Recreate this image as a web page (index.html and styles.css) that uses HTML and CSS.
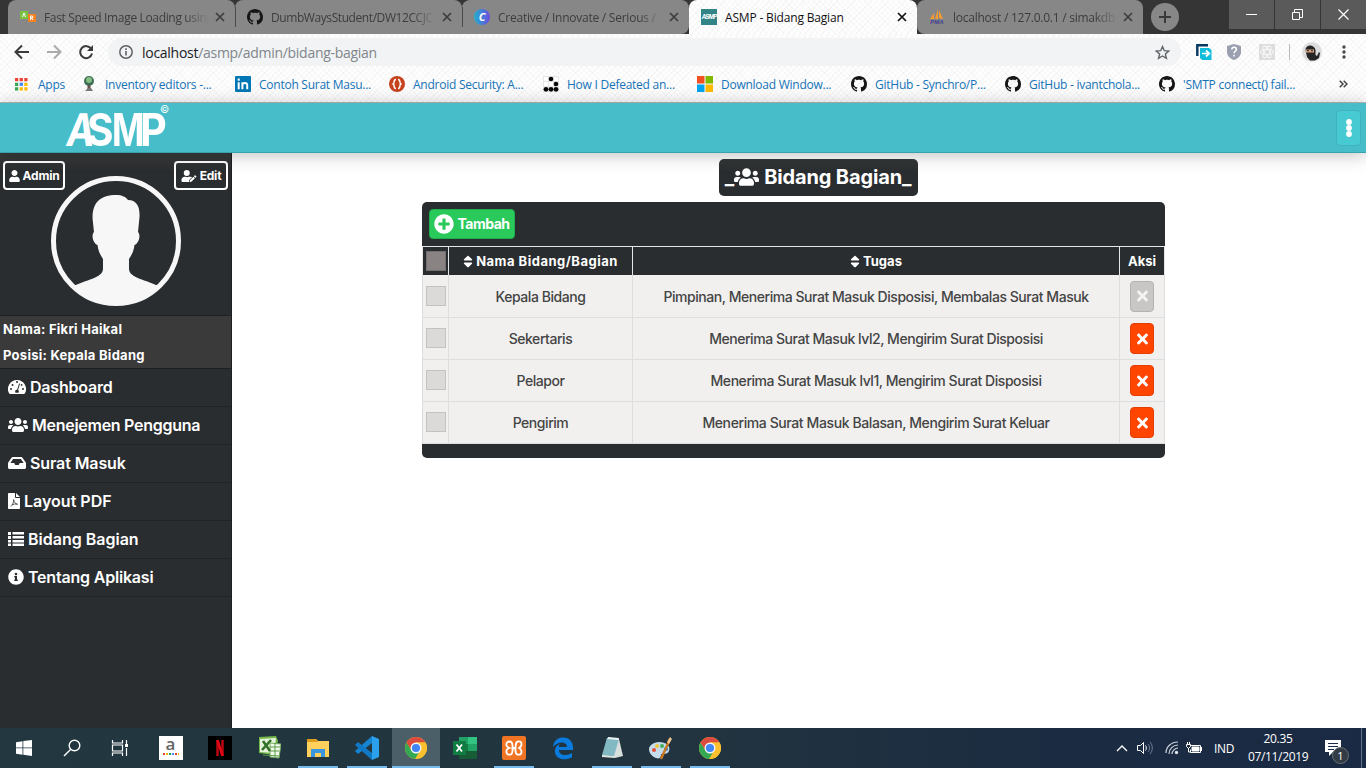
FILE: index.html
```html
<!DOCTYPE html>
<html lang="id">
<head>
<meta charset="utf-8">
<title>ASMP - Bidang Bagian</title>
<link rel="stylesheet" href="styles.css">
</head>
<body>
<svg class="defs" width="0" height="0">
  <symbol id="x" viewBox="0 0 10 10"><path d="M1 1l8 8M9 1l-8 8" stroke="currentColor" stroke-width="1.7"/></symbol>
  <symbol id="github" viewBox="0 0 16 16"><path fill="#161616" d="M8 0C3.58 0 0 3.58 0 8c0 3.54 2.29 6.53 5.47 7.59.4.07.55-.17.55-.38 0-.19-.01-.82-.01-1.49-2.01.37-2.53-.49-2.69-.94-.09-.23-.48-.94-.82-1.13-.28-.15-.68-.52-.01-.53.63-.01 1.08.58 1.23.82.72 1.21 1.87.87 2.33.66.07-.52.28-.87.51-1.07-1.78-.2-3.64-.89-3.64-3.95 0-.87.31-1.59.82-2.15-.08-.2-.36-1.02.08-2.12 0 0 .67-.21 2.2.82.64-.18 1.32-.27 2-.27s1.36.09 2 .27c1.53-1.04 2.2-.82 2.2-.82.44 1.1.16 1.92.08 2.12.51.56.82 1.27.82 2.15 0 3.07-1.87 3.75-3.65 3.95.29.25.54.73.54 1.48 0 1.07-.01 1.93-.01 2.2 0 .21.15.46.55.38A8.01 8.01 0 0 0 16 8c0-4.42-3.58-8-8-8z"/></symbol>
  <symbol id="user" viewBox="0 0 448 512"><path fill="currentColor" d="M224 256c70.7 0 128-57.3 128-128S294.7 0 224 0 96 57.3 96 128s57.3 128 128 128zm89.6 32h-16.7c-22.2 10.2-46.9 16-72.9 16s-50.6-5.8-72.9-16h-16.7C60.2 288 0 348.2 0 422.4V464c0 26.5 21.5 48 48 48h352c26.5 0 48-21.5 48-48v-41.6c0-74.2-60.2-134.4-134.4-134.4z"/></symbol>
  <symbol id="users" viewBox="0 0 640 512"><path fill="currentColor" d="M96 224c35.3 0 64-28.7 64-64s-28.7-64-64-64-64 28.7-64 64 28.7 64 64 64zm448 0c35.3 0 64-28.7 64-64s-28.7-64-64-64-64 28.7-64 64 28.7 64 64 64zm32 32h-64c-17.6 0-33.5 7.1-45.1 18.6 40.3 22.1 68.9 62 75.1 109.4h66c17.7 0 32-14.3 32-32v-32c0-35.3-28.7-64-64-64zm-256 0c61.9 0 112-50.1 112-112S381.9 32 320 32 208 82.1 208 144s50.1 112 112 112zm76.8 32h-8.3c-20.8 10-43.9 16-68.5 16s-47.6-6-68.5-16h-8.3C179.6 288 128 339.6 128 403.2V432c0 26.5 21.5 48 48 48h288c26.5 0 48-21.5 48-48v-28.8c0-63.6-51.6-115.2-115.2-115.2zm-223.7-13.4C161.5 263.1 145.6 256 128 256H64c-35.3 0-64 28.7-64 64v32c0 17.7 14.3 32 32 32h65.9c6.3-47.4 34.9-87.3 75.2-109.4z"/></symbol>
  <symbol id="times" viewBox="0 0 352 512"><path fill="currentColor" d="M242.72 256l100.07-100.07c12.28-12.28 12.28-32.19 0-44.48l-22.24-22.24c-12.28-12.28-32.19-12.28-44.48 0L176 189.28 75.93 89.21c-12.28-12.28-32.19-12.28-44.48 0L9.21 111.45c-12.28 12.28-12.28 32.19 0 44.48L109.28 256 9.21 356.07c-12.28 12.28-12.28 32.19 0 44.48l22.24 22.24c12.28 12.28 32.2 12.28 44.48 0L176 322.72l100.07 100.07c12.28 12.28 32.2 12.28 44.48 0l22.24-22.24c12.28-12.28 12.28-32.19 0-44.48L242.72 256z"/></symbol>
  <symbol id="sort" viewBox="0 0 320 512"><path fill="currentColor" d="M41 288h238c21.4 0 32.1 25.9 17 41L177 448c-9.4 9.4-24.6 9.4-33.9 0L24 329c-15.1-15.1-4.4-41 17-41zm255-105L177 64c-9.4-9.4-24.6-9.4-33.9 0L24 183c-15.1 15.1-4.4 41 17 41h238c21.4 0 32.1-25.9 17-41z"/></symbol>
  <symbol id="chrome" viewBox="0 0 24 24"><circle cx="12" cy="12" r="11" fill="#fbc02d"/><path d="M2.5 6.5A11 11 0 0 0 11.2 23L16.3 14.5 12 12 7.7 14.5z" fill="#34a853"/><path d="M2.5 6.5A11 11 0 0 1 21.5 6.5H12L7.700 14.500z" fill="#dd4b3e"/><path d="M12 6.5h9.5A11 11 0 0 1 11.2 23l5.5-9z" fill="#fbc02d"/><circle cx="12" cy="12" r="5.500" fill="#f5f5f5"/><circle cx="12" cy="12" r="4.1" fill="#4285f4"/></symbol>
</svg>

<div class="browser">
  <div class="tabstrip">
    <div class="tab">
      <svg class="fav" viewBox="0 0 16 16"><path fill="#7bc142" d="M0 2h8v8H0z"/><path fill="#f58220" d="M8 5h8v8H8z"/><path d="M2.5 8L4 4l1.500 4M10.500 11V7h2l.5 2h-2l2 2" stroke="#fff" fill="none"/></svg>
      <span class="tab-title t1">Fast Speed Image Loading using</span><svg class="close"><use href="#x"/></svg>
    </div>
    <div class="tab sep">
      <svg class="fav"><use href="#github"/></svg>
      <span class="tab-title t2">DumbWaysStudent/DW12CCJC</span><svg class="close"><use href="#x"/></svg>
    </div>
    <div class="tab sep">
      <span class="fav canva">C</span>
      <span class="tab-title t3">Creative / Innovate / Serious /</span><svg class="close"><use href="#x"/></svg>
    </div>
    <div class="tab active">
      <span class="fav asmp-fav">ASMP</span>
      <span class="tab-title t4">ASMP - Bidang Bagian</span><svg class="close"><use href="#x"/></svg>
    </div>
    <div class="tab">
      <span class="fav pma"><svg viewBox="0 0 16 11"><path fill="#f59b2d" d="M1 10l4-6v6zM6 10l3-10v10zM10 9V1l4 9z"/></svg><b>PMA</b></span>
      <span class="tab-title t5">localhost / 127.0.0.1 / simakdb</span><svg class="close"><use href="#x"/></svg>
    </div>
    <div class="newtab"><svg width="14" height="14" viewBox="0 0 14 14"><path d="M7 1v12M1 7h12" stroke="#393939" stroke-width="2"/></svg></div>
    <div class="winbtns">
      <span><svg width="11" height="11"><path d="M0 5.500h11" stroke="#fff"/></svg></span>
      <span><svg width="11" height="11" fill="none" stroke="#fff"><path d="M.5 3.500h7v7h-7zM2.500 3.500v-3h8v8h-3"/></svg></span>
      <span><svg width="11" height="11"><path d="M.5.5l10 10M10.500.5l-10 10" stroke="#fff" stroke-width="1.200"/></svg></span>
    </div>
  </div>
  <div class="toolbar">
    <svg class="nav" viewBox="0 0 16 16"><path d="M15 8H2M8 1.500L1.500 8 8 14.500" fill="none" stroke="#3b3b3b" stroke-width="2"/></svg>
    <svg class="nav" viewBox="0 0 16 16"><path d="M1 8h13M8 1.500L14.500 8 8 14.500" fill="none" stroke="#aaa" stroke-width="2"/></svg>
    <svg class="nav" viewBox="0 0 16 16"><path d="M13.300 5A6 6 0 1 0 14 9.500" fill="none" stroke="#3b3b3b" stroke-width="2"/><path d="M15 1v6H9z" fill="#3b3b3b"/></svg>
    <div class="omnibox">
      <svg width="14" height="14" viewBox="0 0 14 14"><circle cx="7" cy="7" r="6.200" fill="none" stroke="#5f6368" stroke-width="1.500"/><path d="M7 6v4.500M7 3.300v1.600" stroke="#5f6368" stroke-width="1.600"/></svg>
      <span class="url"><b>localhost</b>/asmp/admin/bidang-bagian</span>
      <svg class="star" width="15" height="15" viewBox="0 0 24 24"><path d="M12 2.500l2.900 6.600 7.100.6-5.400 4.700 1.700 7L12 17.600l-6.300 3.800 1.700-7L2 9.700l7.100-.6z" fill="none" stroke="#5f6368" stroke-width="2.200"/></svg>
    </div>
    <svg class="e1" width="16" height="16" viewBox="0 0 16 16"><path d="M1.300 12V1.300H12" fill="none" stroke="#073763" stroke-width="2.400"/><path d="M4 4h9l2.500 2v10H6L4 14z" fill="#11bddb"/><path d="M6 9.500h7M10 6.500l3.300 3-3.300 3" fill="none" stroke="#fff" stroke-width="1.700"/></svg>
    <svg class="e2" width="14" height="16" viewBox="0 0 14 16"><path d="M7 0l7 2v6c0 4-3 6.500-7 8-4-1.500-7-4-7-8V2z" fill="#9aa0b0"/><path d="M4.800 5.500c0-3 4.600-3 4.600 0C9.400 7.300 7 7.200 7 9.300M7 10.700v1.700" fill="none" stroke="#fff" stroke-width="1.500"/></svg>
    <svg class="e3" width="16" height="16" viewBox="0 0 16 16"><path fill="#ddd" d="M0 0h16v16H0z"/><g fill="none" stroke="#f8f8f8"><ellipse cx="8" cy="8" rx="6.500" ry="2.600"/><ellipse cx="8" cy="8" rx="6.500" ry="2.600" transform="rotate(60 8 8)"/><ellipse cx="8" cy="8" rx="6.500" ry="2.600" transform="rotate(120 8 8)"/></g></svg>
    <i class="divider"></i>
    <svg class="e4" width="20" height="20" viewBox="0 0 20 20"><circle cx="10" cy="10" r="10" fill="#ddd"/><path d="M3.500 8c0-6 9-6 10 0v5l1.500 1 2-4 1 1-1 5-4 2.500H8L5 15z" fill="#242527"/><path d="M4 7.500h8v3H4z" fill="#dba67f"/><path d="M5 8.700h2m2 0h2" stroke="#222"/></svg>
    <svg class="e5" width="4" height="14" viewBox="0 0 4 14" fill="#4a4a4a"><circle cx="2" cy="2" r="1.700"/><circle cx="2" cy="7" r="1.700"/><circle cx="2" cy="12" r="1.700"/></svg>
  </div>
  <div class="bookmarks">
    <div class="bm apps"><svg viewBox="0 0 14 14"><path fill="#ea4335" d="M0 0h3.500v3.500H0zM5 0h3.500v3.500H5zM10 0h3.500v3.500H10z"/><path fill="#34a853" d="M0 5h3.500v3.500H0zM0 10h3.500v3.500H0z"/><path fill="#4285f4" d="M5 5h3.500v3.500H5z"/><path fill="#fbbc05" d="M10 5h3.500v3.500H10zM5 10h3.500v3.500H5zM10 10h3.500v3.500H10z"/></svg><span>Apps</span></div>
    <div class="bm"><svg viewBox="0 0 16 16"><path d="M8 8v6" stroke="#6e4b43" stroke-width="3"/><circle cx="8" cy="5" r="5" fill="#3d6b55"/><circle cx="8" cy="4" r="3" fill="#85bf83"/><path d="M4 15l3-3h3l2 3z" fill="#777"/></svg><span>Inventory editors -...</span></div>
    <div class="bm"><svg viewBox="0 0 16 16"><rect width="16" height="16" rx="1" fill="#0077b5"/><path d="M3.700 6.200v7M3.700 2.500v2.200M7.400 6.200v7M7.500 9c0-2.700 4.700-2.700 4.700 0v4.200" fill="none" stroke="#fff" stroke-width="2"/></svg><span>Contoh Surat Masu...</span></div>
    <div class="bm"><svg viewBox="0 0 16 16"><circle cx="8" cy="8" r="8" fill="#c6431e"/><path d="M7 3.500C4 3.500 6 7 4.200 8 6 9 4 12.500 7 12.500M9 3.500c3 0 1 3.500 2.800 4.500C10 9 12 12.500 9 12.500" fill="none" stroke="#fff" stroke-width="1.500"/></svg><span>Android Security: A...</span></div>
    <div class="bm"><svg viewBox="0 0 16 16"><path d="M.5.500h15v15H.5zM5.500.500v15M10.500.500v15M.5 5.500h15M.5 10.500h15" fill="#fff" stroke="#ddd" stroke-width=".7"/><g fill="#080808"><circle cx="8" cy="3" r="2.300"/><circle cx="13" cy="8" r="2.300"/><circle cx="3" cy="13.300" r="2.400"/><circle cx="8" cy="13.300" r="2.400"/><circle cx="13" cy="13.300" r="2.400"/></g></svg><span>How I Defeated an...</span></div>
    <div class="bm"><svg viewBox="0 0 16 16"><path fill="#f25022" d="M0 0h7.500v7.500H0z"/><path fill="#7fba00" d="M8.500 0H16v7.500H8.500z"/><path fill="#00a4ef" d="M0 8.500h7.500V16H0z"/><path fill="#ffb900" d="M8.500 8.500H16V16H8.500z"/></svg><span>Download Window...</span></div>
    <div class="bm"><svg><use href="#github"/></svg><span>GitHub - Synchro/P...</span></div>
    <div class="bm"><svg><use href="#github"/></svg><span>GitHub - ivantchola...</span></div>
    <div class="bm"><svg><use href="#github"/></svg><span>'SMTP connect() fail...</span></div>
    <svg class="more" width="9" height="8" viewBox="0 0 9 8"><path d="M.7.700L4 4 .7 7.300M4.700.700L8 4 4.700 7.300" fill="none" stroke="#444" stroke-width="1.500"/></svg>
  </div>
</div>

<header class="header">
  <div class="logo"><i class="la">A</i><i class="ls">S</i><i class="lm">M</i><i class="lp">P</i><sup>©</sup></div>
  <button class="kebab"><svg width="6" height="18" viewBox="0 0 6 18" fill="#fff"><circle cx="3" cy="3" r="2.900"/><circle cx="3" cy="9" r="2.900"/><circle cx="3" cy="15" r="2.900"/></svg></button>
</header>

<div class="layout">
  <aside class="sidebar">
    <div class="profile">
      <div class="pill"><svg width="11" height="12"><use href="#user"/></svg><span>Admin</span></div>
      <svg class="avatar" viewBox="0 0 130 130"><circle cx="65" cy="65" r="62.500" fill="#2a2d2f" stroke="#f7f7f7" stroke-width="5"/><path fill="#f7f7f7" d="M65 19c6 0 10 2 12 5 9 0 12 7 11.500 17L87 56c3 3 1 11-3.500 13-1 7-3 10-5.500 14v10c0 9 18 11 30 17.500A62 62 0 0 1 22 110.500C34 104 52 102 52 93V83c-2.500-4-4.500-7-5.500-14-4.500-2-6.500-10-3.500-13l-1.400-13C41 26 50 19 65 19z"/></svg>
      <div class="pill edit"><svg width="16" height="12" viewBox="0 0 640 512"><path fill="currentColor" d="M224 256a128 128 0 1 0 0-256 128 128 0 0 0 0 256zM135 288C60 288 0 348 0 422v42c0 26 22 48 48 48h274l8-86 122-122c-30-15-70-16-139-16-50 22-96 22-145 0zM358 441l-8 71 71-8 152-152-63-63zM631 268l-39-38c-10-10-25-10-35 0l-31 33 70 70 35-34c10-9 10-22 0-31z"/></svg><span>Edit</span></div>
    </div>
    <div class="identity"><p>Nama: Fikri Haikal</p><p>Posisi: Kepala Bidang</p></div>
    <nav>
      <a><svg width="18" height="16" viewBox="0 0 576 512"><path fill="currentColor" d="M288 32a288 288 0 0 0-248 434c5 9 15 14 25 14h446c10 0 20-5 25-14A288 288 0 0 0 288 32z"/><g fill="#292c2e"><circle cx="288" cy="96" r="32"/><circle cx="96" cy="320" r="32"/><circle cx="144" cy="190" r="32"/><circle cx="480" cy="320" r="32"/><circle cx="435" cy="190" r="28"/><path d="M355 140l30 12-62 202c26 22 32 55 15 84H238c-28-52 5-105 56-94z"/></g></svg><span class="m1">Dashboard</span></a>
      <a><svg width="20" height="16"><use href="#users"/></svg><span class="m2">Menejemen Pengguna</span></a>
      <a><svg width="18" height="16" viewBox="0 0 576 512"><path fill="currentColor" d="M567.938 243.908L462.250 85.374A48 48 0 0 0 422.311 64H153.689a48 48 0 0 0-39.938 21.374L8.062 243.908A48 48 0 0 0 0 270.533V400c0 26.510 21.490 48 48 48h480c26.510 0 48-21.490 48-48V270.533a48 48 0 0 0-8.062-26.625zM162.252 128h251.497l85.333 128H376l-32 64H232l-32-64H76.918z"/></svg><span class="m3">Surat Masuk</span></a>
      <a><svg width="12" height="16" viewBox="0 0 384 512"><path fill="currentColor" d="M24 0h200v136c0 13 11 24 24 24h136v328c0 13-11 24-24 24H24c-13 0-24-11-24-24V24C0 11 11 0 24 0zM256 0l128 128H256z"/><path d="M90 430c40-30 95-120 92-220 5 75 50 140 125 150-70-20-145 0-180 25" fill="none" stroke="#292c2e" stroke-width="24"/></svg><span>Layout PDF</span></a>
      <a><svg width="16" height="16" viewBox="0 0 16 16"><path fill="currentColor" d="M0 1h3v3H0zM0 5h3v3H0zM0 9h3v2.600H0zM0 12.500h3V15H0zM4.500 1H16v2.500H4.500zM4.500 5H16v2.500H4.500zM4.500 9H16v2.500H4.500zM4.500 12.500H16V15H4.500z"/></svg><span>Bidang Bagian</span></a>
      <a><svg width="16" height="16" viewBox="0 0 512 512"><path fill="currentColor" d="M256 8C119.043 8 8 119.083 8 256c0 136.997 111.043 248 248 248s248-111.003 248-248C504 119.083 392.957 8 256 8zm0 110c23.196 0 42 18.804 42 42s-18.804 42-42 42-42-18.804-42-42 18.804-42 42-42zm56 254c0 6.627-5.373 12-12 12h-88c-6.627 0-12-5.373-12-12v-24c0-6.627 5.373-12 12-12h12v-64h-12c-6.627 0-12-5.373-12-12v-24c0-6.627 5.373-12 12-12h64c6.627 0 12 5.373 12 12v100h12c6.627 0 12 5.373 12 12v24z"/></svg><span class="m6">Tentang Aplikasi</span></a>
    </nav>
  </aside>
  <main class="main">
    <h1>_<svg width="25" height="20"><use href="#users"/></svg><span>Bidang Bagian_</span></h1>
    <section class="panel">
      <div class="actions"><button class="add"><svg width="20" height="20" viewBox="0 0 512 512"><path fill="currentColor" d="M256 8C119 8 8 119 8 256s111 248 248 248 248-111 248-248S393 8 256 8zm144 276c0 6.600-5.400 12-12 12h-92v92c0 6.600-5.400 12-12 12h-56c-6.600 0-12-5.400-12-12v-92h-92c-6.600 0-12-5.400-12-12v-56c0-6.600 5.400-12 12-12h92v-92c0-6.600 5.400-12 12-12h56c6.600 0 12 5.400 12 12v92h92c6.600 0 12 5.400 12 12v56z"/></svg><span>Tambah</span></button></div>
      <div class="row head"><div><i class="check"></i></div><div><svg width="10" height="15"><use href="#sort"/></svg><span class="wide">Nama Bidang/Bagian</span></div><div><svg width="10" height="15"><use href="#sort"/></svg><span>Tugas</span></div><div><span>Aksi</span></div></div>
      <div class="row first"><div><i class="check"></i></div><div><span>Kepala Bidang</span></div><div><span>Pimpinan, Menerima Surat Masuk Disposisi, Membalas Surat Masuk</span></div><div><button class="del off"><svg width="11" height="16"><use href="#times"/></svg></button></div></div>
      <div class="row"><div><i class="check"></i></div><div><span>Sekertaris</span></div><div><span>Menerima Surat Masuk lvl2, Mengirim Surat Disposisi</span></div><div><button class="del"><svg width="11" height="16"><use href="#times"/></svg></button></div></div>
      <div class="row"><div><i class="check"></i></div><div><span>Pelapor</span></div><div><span>Menerima Surat Masuk lvl1, Mengirim Surat Disposisi</span></div><div><button class="del"><svg width="11" height="16"><use href="#times"/></svg></button></div></div>
      <div class="row"><div><i class="check"></i></div><div><span>Pengirim</span></div><div><span class="last">Menerima Surat Masuk Balasan, Mengirim Surat Keluar</span></div><div><button class="del"><svg width="11" height="16"><use href="#times"/></svg></button></div></div>
    </section>
  </main>
</div>

<footer class="taskbar">
  <div class="task"><svg viewBox="0 0 24 24"><path fill="#fff" d="M4 6.200l6.500-1v6.300H4zM11.300 5L20 4v7.500h-8.700zM4 12.300h6.500v6.400L4 17.800zM11.300 12.300H20V20l-8.700-1.200z"/></svg></div>
  <div class="task"><svg viewBox="0 0 24 24"><g fill="none" stroke="#fff" stroke-width="1.400"><circle cx="14.500" cy="9.500" r="5.300"/><path d="M10.800 13.300L4 20"/></g></svg></div>
  <div class="task"><svg viewBox="0 0 24 24"><path d="M4.500 4v3h10V4M4.500 20v-3h10v3M4.500 9h10v6h-10zM18.500 4v4M18.500 12v8" fill="none" stroke="#fff" stroke-width="1.200"/><path d="M17 8h3v3h-3z" fill="#fff"/></svg></div>
  <div class="task s4"><span class="amazon">a<i></i></span></div>
  <div class="task"><svg viewBox="0 0 24 24"><path d="M0 0h24v24H0z"/><path d="M9.500 20V4M14.500 20V4" stroke="#b20710" stroke-width="2.600"/><path d="M8.200 4h2.600l5 16h-2.600z" fill="#e50914"/></svg></div>
  <div class="task"><svg viewBox="0 0 24 24"><path d="M2 1l17-1 2 5-4 14-15-2z" fill="#72b84a"/><path d="M3 3l16-1-2 15-14-1z" fill="#e6f3dc"/><path d="M13 7l11 1-2 14-9-1z" fill="#f0faeb" stroke="#70a95c"/><path d="M13 11h10M13 15h9M6 19l16 1M18 7v14" stroke="#5b9b46"/><path d="M6 5l7 10M14 4L5 14" stroke="#33712a" stroke-width="2.600"/></svg></div>
  <div class="task run"><svg viewBox="0 0 24 24"><path d="M1 3h9l2 2h11v16H1z" fill="#ffd15c"/><path d="M1 3h9l2 3H1z" fill="#dd9f1b"/><path d="M5 21v-8h14v8h-4v-4H9v4z" fill="#3895de"/></svg></div>
  <div class="task run"><svg viewBox="0 0 24 24"><path d="M17 0l7 3v18l-7 3z" fill="#2ba1ed"/><path d="M17 7L3 18l-3-3L17 0z" fill="#1684d1"/><path d="M17 17L3 6 0 9l17 15z" fill="#1179c4"/></svg></div>
  <div class="task run current"><svg><use href="#chrome"/></svg></div>
  <div class="task"><svg viewBox="0 0 24 24"><path fill="#21a366" d="M6 1h18v22H6z"/><path fill="#33c481" d="M15 1h9v7h-9z"/><path fill="#107c41" d="M6 8h9v7H6z"/><path fill="#185c37" d="M6 15h18v8H6z"/><path fill="#107c41" d="M0 5h13v14H0z"/><path d="M3.500 8.500l5.500 7M9 8.500l-5.500 7" stroke="#fff" stroke-width="1.800"/></svg></div>
  <div class="task run"><svg viewBox="0 0 24 24"><rect width="24" height="24" rx="2" fill="#f07423"/><path d="M8 5.500C5 5.500 4 7 4.500 9.500c.4 1.500 2 2 3 2.500-2 .5-3.500 2-3 4.500.3 2 2 2.500 4 2 2.500-.5 2-3 2-6h3c0 3-.5 5.500 2 6 2 .5 4 0 4-2.500 0-2.500-1-3.500-3-4 2-.5 3-1.500 3-4C19.500 6 18 5 16 5.500c-3 .5-2 3.500-2.500 6.500h-3c0-3 .5-6-2.500-6.500z" fill="none" stroke="#fff" stroke-width="1.800"/></svg></div>
  <div class="task"><svg viewBox="0 0 24 24"><path d="M2 11C3 4 7 1.500 12 1.500c7 0 10 5 10 10V14H8c0 6 8 6 13 3v4.300C12 26 3 22 4 14c.4-3 2-5 5-6-1 1-1 2-1 3h8c0-6-9-6-14 0z" fill="#0a7bdc"/></svg></div>
  <div class="task run"><svg viewBox="0 0 24 24"><path d="M7 2l12 1-5 18H3z" fill="#86bec8"/><path d="M7 2l12 1 4 17-8 2-3-2z" fill="#d9dfdc"/><path d="M7 2l12 1-5 17-12-1z" fill="#83b9c3"/><path d="M8 1l11 1-.5 2-11-1z" fill="#eef4f4"/><path d="M2 19l12 1.500L15 22 2 21z" fill="#e8e8df"/></svg></div>
  <div class="task run"><svg viewBox="0 0 24 24"><path d="M10 6c7 0 12 4 10 9s-8 1-8 4-2 4-5 3c-5-2-7-6-7-9s4-7 10-7z" fill="#c4dcec"/><circle cx="5" cy="14" r="2" fill="#e24e36"/><circle cx="8" cy="10" r="2" fill="#f1c43a"/><circle cx="13" cy="10" r="2" fill="#43aa59"/><circle cx="17" cy="13" r="2" fill="#2b79c8"/><path d="M21 3l-9 20" stroke="#c97822" stroke-width="2.400"/><path d="M18 6l3-5 2 2-3 5z" fill="#f0c58f"/></svg></div>
  <div class="task run"><svg><use href="#chrome"/></svg></div>
  <div class="tray">
    <svg width="12" height="8" viewBox="0 0 12 8"><path d="M1 7l5-5 5 5" fill="none" stroke="#fff" stroke-width="1.400"/></svg>
    <svg class="vol" width="16" height="14" viewBox="0 0 16 14" fill="none" stroke="#fff"><path d="M.5 4.500h3l3-3v11l-3-3h-3zM8.500 4.500c1 1 1 4 0 5"/><path d="M11 3c2 2 2 6 0 8M13 1c3 3 3 9 0 12" stroke="#71809a"/></svg>
    <svg class="wifi" width="14" height="14" viewBox="0 0 14 14" fill="none" stroke="#ccd4df" stroke-width="1.200"><path d="M1 12C1 6 6 1 13 1M4 13c0-5 4-9 9-9M7 13c0-3 3-6 6-6"/><circle cx="11.500" cy="11.500" r="1.200" fill="#fff"/></svg>
    <svg class="bat" width="16" height="12" viewBox="0 0 16 12" fill="none" stroke="#fff"><path d="M4.500 3.500h10v7h-10v-3M15.500 5v4M.5 2.500h4v2l-2 2-2-2zM1.500 0v2M3.500 0v2M2.500 6v4h2"/><path d="M6 5h7v4H6z" fill="#fff"/></svg>
    <span class="lang">IND</span>
    <div class="clock"><span>20.35</span><span>07/11/2019</span></div>
    <div class="notif"><svg width="16" height="16" viewBox="0 0 16 16"><path d="M0 0h16v12H8l-4 4v-4H0z" fill="#fff"/><path d="M3 3.500h10M3 6.500h10M3 9.500h6" stroke="#1c2d45"/></svg><span>1</span></div>
    <i class="edge"></i>
  </div>
</footer>
</body>
</html>
```
FILE: styles.css
```css
* { box-sizing: border-box; }
body { margin: 0; width: 1366px; height: 768px; overflow: hidden; background: #fff; font-family: Inter, "Liberation Sans", sans-serif; display: flex; flex-direction: column; }
svg { display: block; flex: none; }
.defs { position: absolute; }
button { border: 0; padding: 0; font: inherit; color: inherit; }
span, p { white-space: nowrap; }

.browser, .tab.active { background: repeating-linear-gradient(45deg, transparent 0 3px, rgba(0,0,0,.025) 3px 4px), repeating-linear-gradient(-45deg, #fefefe 0 3px, #f7f7f7 3px 4px); }
.browser { height: 103px; flex: none; font-family: "Open Sans", "Noto Sans", sans-serif; font-size: 12px; border-bottom: 1px solid #bab7b4; }
.tabstrip { display: flex; height: 34px; padding-left: 8px; background: #353535; }
.tab { width: 227px; height: 34px; display: flex; align-items: center; padding: 0 10px 0 12px; border-radius: 8px 8px 0 0; background-color: #878787; color: #3d3d3d; position: relative; }
.tab.sep::before { content: ""; position: absolute; left: 0; top: 7px; width: 1px; height: 20px; background: #4a4a4a; }
.tab:nth-child(3) { border-bottom-right-radius: 8px; }
.tab:nth-child(5) { border-bottom-left-radius: 8px; width: 226px; }
.tab.active { width: 228px; color: #111; background-color: #fff; }
.fav { width: 16px; height: 16px; flex: none; }
.tab-title { width: 168px; margin-left: 8px; overflow: hidden; flex: none; }
.tab:not(.active) .tab-title { -webkit-mask-image: linear-gradient(90deg, #000 84%, transparent 98%); mask-image: linear-gradient(90deg, #000 84%, transparent 98%); }
.close { width: 10px; height: 10px; margin-left: auto; }
.canva { border-radius: 50%; background: linear-gradient(90deg, #20b0cf, #6b4ce0); color: #fff; font: italic bold 11px/16px "Open Sans", sans-serif; text-align: center; }
.asmp-fav { background: #338486; color: #fff; font: bold italic 6px/16px Inter, sans-serif; letter-spacing: -.8px; text-align: center; }
.pma { font: italic bold 6px/5px "Liberation Sans", sans-serif; color: #45418e; text-align: center; }
.newtab { width: 28px; height: 28px; border-radius: 50%; background: #878787; margin: 3px 0 0 8px; display: flex; align-items: center; justify-content: center; }
.winbtns { margin-left: auto; display: flex; gap: 1px; height: 29px; }
.winbtns span { width: 45px; background: #5a5a5a; display: flex; align-items: center; justify-content: center; }
.t1 { letter-spacing: -.34px; }
.t2 { letter-spacing: -.42px; }
.t3 { letter-spacing: -.24px; }
.t4 { letter-spacing: -.17px; }
.t5 { letter-spacing: -.25px; }

.toolbar { height: 36px; display: flex; align-items: center; padding-left: 14px; }
.nav { width: 16px; height: 16px; margin-right: 16px; }
.omnibox { width: 1073px; height: 28px; margin-left: -2px; border-radius: 14px; background: #f1f3f4; display: flex; align-items: center; padding: 0 11px 0 11px; }
.url { margin-left: 9px; font-size: 14px; letter-spacing: -.28px; color: #80868b; }
.url b { font-weight: 400; color: #202124; }
.star { margin-left: auto; }
.e1 { margin-left: 15px; }
.e2 { margin-left: 15px; }
.e3 { margin-left: 18px; }
.divider { width: 1px; height: 16px; margin-left: 14px; background: #bbb; }
.e4 { margin-left: 12px; }
.e5 { margin-left: 20px; }

.bookmarks { display: flex; height: 28px; padding: 0 0 0 81px; align-items: center; color: #1573b8; }
.bm { width: 154px; display: flex; align-items: center; gap: 8px; flex: none; }
.bm svg { width: 16px; height: 16px; }
.bm.apps { width: 66px; margin-left: -66px; gap: 10px; }
.bm.apps svg { width: 13px; height: 13px; }
.bm span { letter-spacing: -.25px; }
.more { margin-left: 26px; }

.header { height: 50px; flex: none; background: #47bdc9; border-bottom: 1px solid #37a3ae; display: flex; justify-content: space-between; align-items: center; padding: 0 5px 0 67px; box-shadow: 0 2px 18px rgba(0,0,0,.25); position: relative; z-index: 2; }
.logo { display: flex; align-items: flex-start; color: #fff; height: 48px; line-height: 52px; font-size: 45px; font-weight: 700; }
.logo i { font-style: normal; display: block; transform-origin: left; }
.logo .la { width: 20px; transform: skewX(-8deg) scaleX(.84); }
.logo .ls { width: 25px; transform: scaleX(.9); }
.logo .lm { width: 28px; transform: scaleX(.77); }
.logo .lp { width: 20px; transform: scaleX(.92); }
.logo sup { font-size: 10px; line-height: 11px; font-weight: 400; }
.kebab { width: 25px; height: 36px; border: 1px solid #3fb2bd; border-radius: 4px; background: #48cad3; display: flex; align-items: center; justify-content: center; }

.layout { flex: 1; display: flex; min-height: 0; }
.sidebar { width: 232px; background: #2a2d2f; border-right: 1px solid #1d1f20; color: #fff; font-weight: 700; }
.profile { height: 163px; border-bottom: 1px solid #1d1f20; display: flex; align-items: flex-start; justify-content: space-between; padding: 8px 3px 0; background: linear-gradient(#3a3c3c, #2a2d2f 18px); }
.pill { width: 62px; height: 29px; border: 2px solid #fff; border-radius: 4px; display: flex; align-items: center; justify-content: center; gap: 3px; font-size: 12px; letter-spacing: -.2px; flex: none; z-index: 1; }
.pill.edit { width: 54px; }
.avatar { width: 130px; height: 130px; margin: 15px -10px 0 -18px; }
.identity { height: 53px; background: #3a3a3a; border-bottom: 1px solid #1d1f20; font-size: 13px; padding-left: 3px; letter-spacing: .27px; }
.identity p { margin: 0; line-height: 26px; }
nav a { height: 38px; display: flex; align-items: center; gap: 4px; padding: 0 0 2px 8px; border-bottom: 1px solid #202325; font-size: 16px; font-weight: 600; }
.m1 { letter-spacing: -.2px; }
.m2 { letter-spacing: -.27px; }
.m3 { letter-spacing: -.1px; }
.m6 { letter-spacing: -.2px; }
.main { flex: 1; display: flex; flex-direction: column; align-items: center; padding: 6px 0 0; }
.main h1 { margin: 0 0 0 38px; width: 199px; height: 37px; padding-bottom: 1px; border-radius: 5px; background: linear-gradient(#343738, #2a2d2f 14px); color: #fff; font-size: 20px; font-weight: 700; display: flex; align-items: center; justify-content: center; }
.main h1 span { margin-left: 5px; letter-spacing: -.15px; }
.panel { width: 743px; height: 256px; margin: 6px 0 0 -11px; border-radius: 5px; background: #2a2d2f; overflow: hidden; }
.actions { height: 44px; padding: 7px; }
.add { width: 86px; height: 30px; border: 1px solid #20ad4b; border-radius: 4px; background: #2ac95b; color: #fff; font-weight: 700; font-size: 14px; letter-spacing: -.5px; display: flex; align-items: center; justify-content: center; gap: 3px; padding-bottom: 1px; }
.row { height: 42px; display: grid; grid-template-columns: 27px 184px 487px 45px; color: #444; font-size: 14px; font-weight: 500; background: #f1f0ef; letter-spacing: -.45px; }
.row > div { display: flex; align-items: center; justify-content: center; gap: 3px; border-right: 1px solid #dedede; border-bottom: 1px solid #dedede; }
.row > div:first-child { border-left: 1px solid #dedede; }
.row .last { letter-spacing: -.4px; }
.row.first { height: 43px; }
.row.head { height: 29px; background: #2a2d2f; color: #fff; font-size: 13px; font-weight: 700; letter-spacing: 0; }
.row.head .wide { letter-spacing: .5px; }
.row.head > div { border-bottom: 0; border-top: 1px solid #e6e6e6; border-color: #e6e6e6; }
.check { width: 20px; height: 20px; background: #dcdad9; border: 1px solid #c4c2c1; margin-bottom: 1px; }
.first .check, .head .check { margin-bottom: 0; }
.head .check { background: #8a8383; border-color: #746e6e; }
.del { width: 24px; height: 31px; border-radius: 4px; border: 1px solid #e63e00; background: #ff4500; color: #fff; display: flex; align-items: center; justify-content: center; }
.del.off { background: #c8c7c6; border-color: #b4b3b2; color: #f3f3f3; }

.taskbar { height: 40px; flex: none; background: linear-gradient(90deg, #223740, #21343f 50%, #1b2b42 80%, #1a2a44); display: flex; color: #fff; font-family: "Open Sans", sans-serif; font-size: 12px; }
.task { width: 49px; height: 40px; display: flex; align-items: center; justify-content: center; position: relative; flex: none; }
.task:nth-child(-n+3) { width: 48px; }
.task.s4 { margin-left: 2px; }
.task svg { width: 24px; height: 24px; }
.task.run::after { content: ""; position: absolute; left: 5px; bottom: 0; width: 40px; height: 2px; background: #76b9ed; }
.task.current { background: linear-gradient(90deg, transparent 1px, #4b5f68 1px); }
.task.current::after { left: 1px; width: 48px; }
.amazon { width: 24px; height: 24px; background: #fff; color: #666; font: 600 17px/16px "Open Sans", sans-serif; text-align: center; }
.amazon i { display: block; height: 2px; margin: 1px 4px 0; background: repeating-linear-gradient(90deg, #db4437 0 2px, #fff 2px 3px, #f4b400 3px 5px, #fff 5px 6px, #0f9d58 6px 8px, #fff 8px 9px, #4285f4 9px 11px, #fff 11px 12px); }
.tray { margin-left: auto; display: flex; align-items: center; height: 40px; }
.vol { margin-left: 9px; }
.wifi { margin-left: 12px; }
.bat { margin-left: 7px; }
.lang { margin-left: 12px; width: 20px; letter-spacing: -.3px; }
.clock { width: 60px; margin-left: 14px; display: flex; flex-direction: column; text-align: center; line-height: 18px; letter-spacing: -.35px; }
.notif { position: relative; margin-left: 17px; }
.notif span { position: absolute; left: 7px; top: 7px; width: 17px; height: 17px; border-radius: 50%; background: #333b45; border: 1px solid #687078; font-size: 11px; line-height: 15px; text-align: center; }
.edge { width: 1px; height: 40px; margin-left: 20px; margin-right: 4px; background: #63738a; }
```
